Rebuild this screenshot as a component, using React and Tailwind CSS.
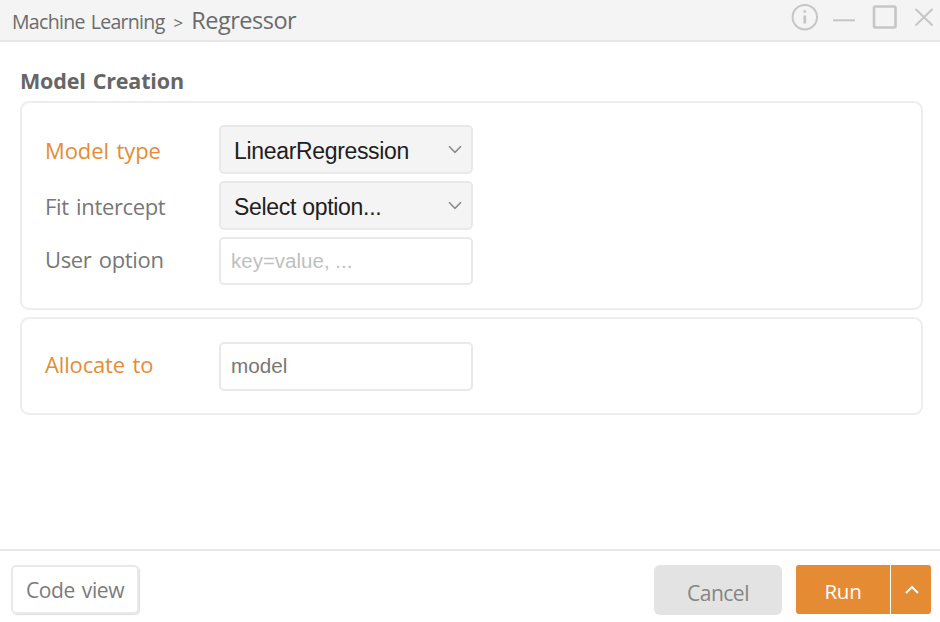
import React from "react";

const ui = "font-['Open_Sans','Noto_Sans',sans-serif] leading-none whitespace-nowrap";
const arial = "font-['Liberation_Sans',Arial,sans-serif] leading-none whitespace-nowrap";

function Chevron() {
  return (
    <svg width="14" height="9" viewBox="0 0 14 9" fill="none" stroke="#8c8c8c" strokeWidth="1.6" className="shrink-0">
      <path d="M1 1.3 7 7.3 13 1.3" />
    </svg>
  );
}

function Label({ children, required, className = "" }) {
  return (
    <div className={`${ui} w-[174px] text-[22px] ${required ? "text-[#e58c35]" : "text-[#777777]"} ${className}`}>
      {children}
    </div>
  );
}

function Select({ children, className = "" }) {
  return (
    <div className="flex h-[49px] w-[254px] items-center justify-between rounded-[5px] border-2 border-[#e9e9e9] bg-[#f4f4f4] pr-[9px] pl-[13px]">
      <span className={`${arial} pt-[3px] text-[23px] text-[#202020] ${className}`}>{children}</span>
      <Chevron />
    </div>
  );
}

export default function App() {
  return (
    <div className="flex h-[622px] w-[940px] flex-col overflow-hidden bg-white">
      <header className="flex h-[42px] shrink-0 items-start justify-between border-b-2 border-[#e8e8e8] bg-[#f4f4f4] pr-[7px] pl-[12px]">
        <div className={`${ui} flex items-baseline pt-[9px] text-[#6b6b6b]`}>
          <span className="text-[19.5px] tracking-[-0.68px] [word-spacing:1.5px]">Machine Learning</span>
          <span className="ml-[9px] text-[17px]">&gt;</span>
          <span className="ml-[8px] text-[23.5px] tracking-[-0.5px]">Regressor</span>
        </div>
        <svg width="143" height="34" viewBox="790 0 143 34" fill="none" stroke="#c6c6c6" strokeWidth="2">
          <circle cx="804.8" cy="17.2" r="12.2" />
          <path d="M804.8 15.5V23.5M804.8 10.3V12.8" strokeWidth="2.8" />
          <path d="M833 20.3H855" />
          <rect x="874" y="6.5" width="21.5" height="21" rx="1.5" strokeWidth="2.6" />
          <path d="M915.5 9 932.5 25.5M932.5 9 915.5 25.5" />
        </svg>
      </header>

      <main className="flex-1 pt-[28px] pr-[17px] pl-[20px]">
        <h1 className={`${ui} h-[31px] text-[21.5px] font-bold tracking-[-0.15px] text-[#666666] [word-spacing:1.5px]`}>
          Model Creation
        </h1>
        <section className="flex h-[209px] flex-col gap-[7px] rounded-[9px] border-2 border-[#ededed] pt-[22px] pl-[23px]">
          <div className="flex h-[49px] items-center">
            <Label required className="tracking-[-0.1px] [word-spacing:2px]">Model type</Label>
            <Select className="tracking-[-0.33px]">LinearRegression</Select>
          </div>
          <div className="flex h-[49px] items-center">
            <Label className="tracking-[-0.35px] [word-spacing:2px]">Fit intercept</Label>
            <Select className="tracking-[-0.3px]">Select option...</Select>
          </div>
          <div className="flex h-[48px] items-center">
            <Label className="pb-[4px] tracking-[-0.35px] [word-spacing:2px]">User option</Label>
            <div className={`${arial} flex h-[48px] w-[254px] items-center rounded-[5px] border-2 border-[#e9e9e9] pl-[10px] text-[20.5px] text-[#c0c0c0]`}>
              key=value, ...
            </div>
          </div>
        </section>
        <section className="mt-[7px] flex h-[98px] rounded-[9px] border-2 border-[#ededed] pt-[23px] pl-[23px]">
          <div className="flex h-[49px] items-center">
            <Label required className="pb-[5px] tracking-[-0.15px] [word-spacing:2px]">Allocate to</Label>
            <div className={`${arial} flex h-[49px] w-[254px] items-center rounded-[5px] border-2 border-[#e9e9e9] pl-[10px] text-[20.7px] text-[#777777]`}>
              model
            </div>
          </div>
        </section>
      </main>

      <footer className="flex h-[73px] shrink-0 items-start justify-between border-t-2 border-[#e8e8e8] pt-[14px] pr-[9px] pl-[11px]">
        <button className={`${ui} h-[49px] w-[128px] rounded-[5px] border-2 border-[#e9e9e9] pt-[2px] text-[21px] tracking-[-0.4px] text-[#7b7b7b] shadow-[1px_1px_1px_#dedede] [word-spacing:2px]`}>
          Code view
        </button>
        <div className="flex">
          <button className={`${ui} h-[50px] w-[128px] rounded-[6px] bg-[#e3e3e3] pt-[6px] text-[21px] tracking-[-0.5px] text-[#858585]`}>
            Cancel
          </button>
          <div className="ml-[14px] flex h-[49px] gap-px">
            <button className={`${ui} w-[94px] rounded-l-[3px] bg-[#e48b33] pt-[4px] text-[20.5px] tracking-[-0.2px] text-white`}>Run</button>
            <button className="flex w-[40px] items-center justify-center rounded-r-[3px] bg-[#e48b33] pl-px">
              <svg width="14" height="9" viewBox="0 0 14 9" fill="none" stroke="#ffffff" strokeWidth="2">
                <path d="M1 8 7 2 13 8" />
              </svg>
            </button>
          </div>
        </div>
      </footer>
    </div>
  );
}
